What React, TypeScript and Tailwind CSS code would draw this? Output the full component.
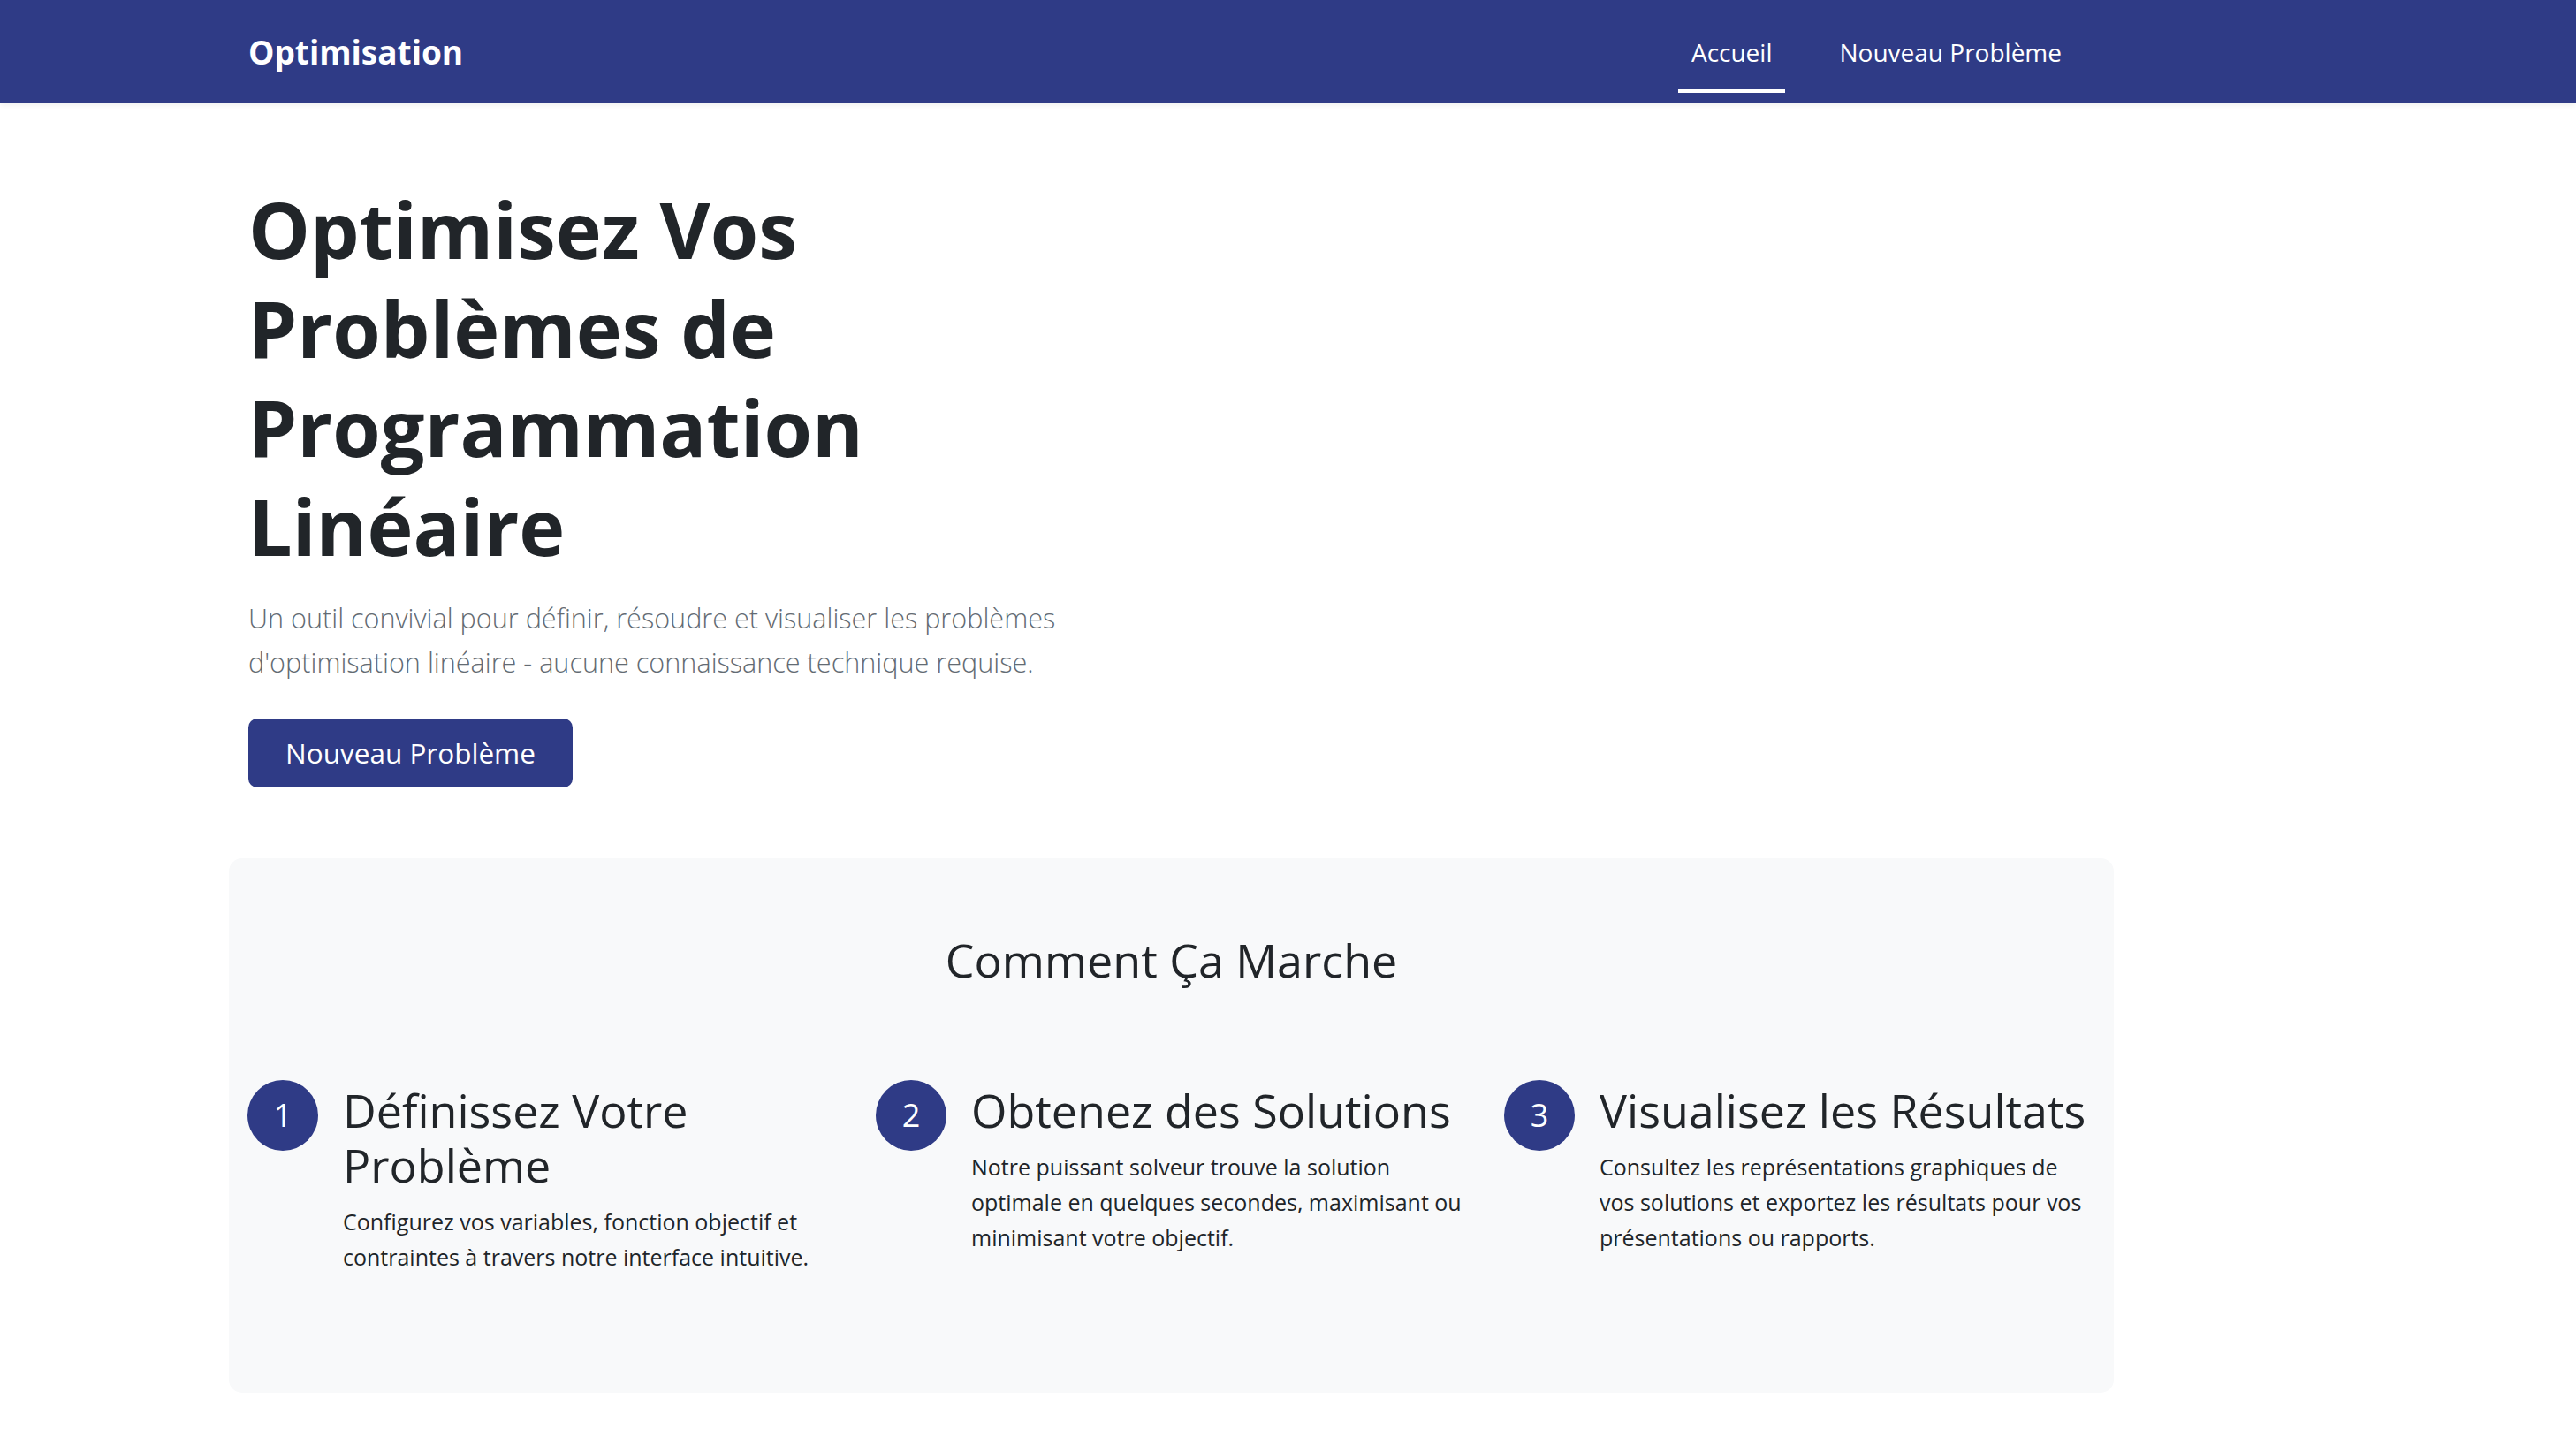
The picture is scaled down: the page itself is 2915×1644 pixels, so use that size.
import React from 'react';

const steps = [
  {
    n: 1,
    title: ['Définissez Votre', 'Problème'],
    text: ['Configurez vos variables, fonction objectif et', 'contraintes à travers notre interface intuitive.'],
  },
  {
    n: 2,
    title: ['Obtenez des Solutions'],
    text: ['Notre puissant solveur trouve la solution', 'optimale en quelques secondes, maximisant ou', 'minimisant votre objectif.'],
  },
  {
    n: 3,
    title: ['Visualisez les Résultats'],
    text: ['Consultez les représentations graphiques de', 'vos solutions et exportez les résultats pour vos', 'présentations ou rapports.'],
  },
];

function Lines({ lines }: { lines: string[] }) {
  return (
    <>
      {lines.map((l, i) => (
        <React.Fragment key={i}>
          {i > 0 && <br />}
          {l}
        </React.Fragment>
      ))}
    </>
  );
}

export default function App() {
  return (
    <div className="min-h-screen bg-white font-['Open_Sans',sans-serif] text-[#212529]">
      <nav className="h-[117px] bg-[#2f3b86] shadow-[0_3px_6px_rgba(0,0,0,0.06)]">
        <div className="ml-[281px] flex h-full w-[2067px] items-center justify-between">
          <a className="text-[37px] font-bold text-white">Optimisation</a>
          <ul className="flex h-full items-stretch gap-[46px] text-[28px] text-white">
            <li className="relative flex items-center px-[15px]">
              Accueil
              <span className="absolute bottom-[12px] left-0 right-0 h-[4px] bg-white" />
            </li>
            <li className="flex items-center px-[15px]">Nouveau Problème</li>
          </ul>
        </div>
      </nav>

      <section className="pl-[281px] pt-[86px]">
        <h1 className="text-[88px] font-bold leading-[112px]">
          Optimisez Vos
          <br />
          Problèmes de
          <br />
          Programmation
          <br />
          Linéaire
        </h1>
        <p className="mt-[23px] text-[30.6px] font-light leading-[50px] text-[#636b73]">
          Un outil convivial pour définir, résoudre et visualiser les problèmes
          <br />
          d'optimisation linéaire - aucune connaissance technique requise.
        </p>
        <div className="mt-[39px] flex">
          <button className="flex h-[78px] items-center rounded-[10px] bg-[#2f3b86] px-[42px] text-[31.5px] text-white">
            Nouveau Problème
          </button>
        </div>
      </section>

      <section className="ml-[259px] mt-[80px] w-[2133px] rounded-[15px] bg-[#f8f9fa] pb-[134px] pt-[84px]">
        <h2 className="text-center text-[52px] leading-[62px]">Comment Ça Marche</h2>
        <div className="mt-[105px] grid grid-cols-3">
          {steps.map((s) => (
            <div key={s.n} className="flex items-start gap-[28px] px-[21px]">
              <div className="flex h-[80px] w-[80px] shrink-0 items-center justify-center rounded-full bg-[#2f3b86] text-[36px] text-white">
                {s.n}
              </div>
              <div className="pt-[3px]">
                <h3 className="whitespace-nowrap text-[52px] leading-[62px]">
                  <Lines lines={s.title} />
                </h3>
                <p className="mt-[13px] whitespace-nowrap text-[25px] leading-[40px]">
                  <Lines lines={s.text} />
                </p>
              </div>
            </div>
          ))}
        </div>
      </section>
    </div>
  );
}
